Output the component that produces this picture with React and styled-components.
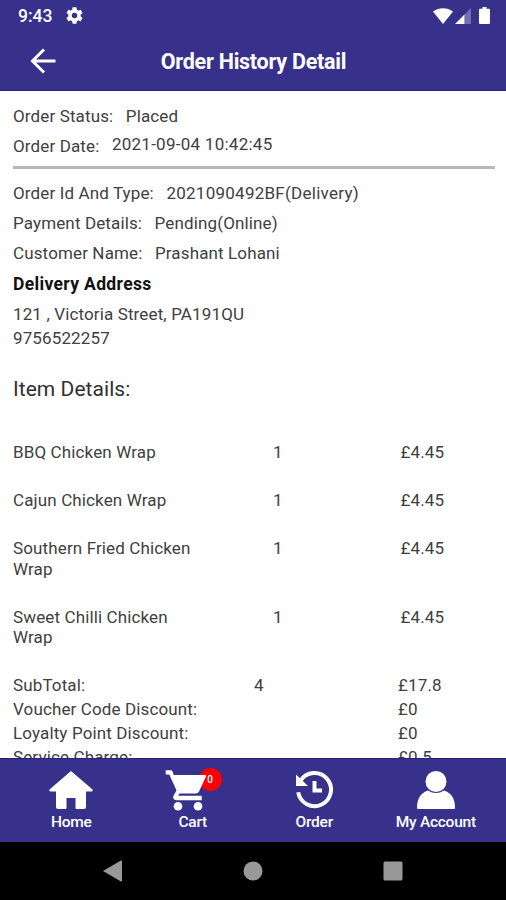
import React, { Component } from "react";
import styled, { createGlobalStyle } from "styled-components";

const GlobalStyle = createGlobalStyle`
  * {
    box-sizing: border-box;
  }
  body {
    margin: 0;
    background-color: #ffffff;
    font-family: Roboto, "Liberation Sans", sans-serif;
    overflow: hidden;
  }
`;

const items = [
  { name: 'BBQ Chicken Wrap', qty: 1, price: '£4.45' },
  { name: 'Cajun Chicken Wrap', qty: 1, price: '£4.45' },
  { name: 'Southern Fried Chicken Wrap', qty: 1, price: '£4.45' },
  { name: 'Sweet Chilli Chicken Wrap', qty: 1, price: '£4.45' },
];

const totals = [
  { label: 'SubTotal:', qty: 4, price: '£17.8' },
  { label: 'Voucher Code Discount:', price: '£0' },
  { label: 'Loyalty Point Discount:', price: '£0' },
  { label: 'Service Charge:', price: '£0.5' },
];

function StatusBar() {
  return (
    <StatusRow>
      <Clock>9:43</Clock>
      <svg width="17" height="17" viewBox="2 2 20 20">
        <path fill="#fff" d="M19.14 12.94c.04-.3.06-.61.06-.94 0-.32-.02-.64-.07-.94l2.03-1.58c.18-.14.23-.41.12-.61l-1.92-3.32c-.12-.22-.37-.29-.59-.22l-2.39.96c-.5-.38-1.03-.7-1.62-.94l-.36-2.54c-.04-.24-.24-.41-.48-.41h-3.84c-.24 0-.43.17-.47.41l-.36 2.54c-.59.24-1.13.57-1.62.94l-2.39-.96c-.22-.08-.47 0-.59.22L2.74 8.87c-.12.21-.08.47.12.61l2.03 1.58c-.05.3-.09.63-.09.94s.02.64.07.94l-2.03 1.58c-.18.14-.23.41-.12.61l1.92 3.32c.12.22.37.29.59.22l2.39-.96c.5.38 1.03.7 1.62.94l.36 2.54c.05.24.24.41.48.41h3.84c.24 0 .44-.17.47-.41l.36-2.54c.59-.24 1.13-.56 1.62-.94l2.39.96c.22.08.47 0 .59-.22l1.92-3.32c.12-.22.07-.47-.12-.61l-2.01-1.58zM12 15.2A3.2 3.2 0 1 1 12 8.8a3.2 3.2 0 0 1 0 6.4z" />
      </svg>
      <Signals>
        <svg width="20" height="16" viewBox="0 0 20 16">
          <path fill="#fff" d="M0 3.6C5.6-.9 14.4-.9 20 3.6L10 16z" />
        </svg>
        <svg width="16" height="16" viewBox="0 0 16 16">
          <path fill="#fff" fillOpacity=".3" d="M9.500 6.500L16 0v16H9.500z" />
          <path fill="#fff" d="M0 16l9.500-9.500V16z" />
        </svg>
        <Battery width="11" height="17" viewBox="0 0 11 17">
          <path fill="#fff" d="M3.500 0h4v1.700H10q1 0 1 1V16q0 1-1 1H1q-1 0-1-1V2.700q0-1 1-1h2.500z" />
        </Battery>
      </Signals>
    </StatusRow>
  );
}

function Header(props) {
  return (
    <HeaderBox>
      <StatusBar />
      <TitleRow>
        <BackButton>
          <svg width="26" height="26" viewBox="0 0 26 26" fill="none" stroke="#fff" strokeWidth="3">
            <path d="M25.500 13H2.500M14 1.500L2.500 13L14 24.500" />
          </svg>
        </BackButton>
        <Title>{props.title}</Title>
      </TitleRow>
    </HeaderBox>
  );
}

function Field(props) {
  return (
    <FieldRow>
      <span>{props.label}</span>
      <FieldValue $raised={props.raised} $numeric={props.numeric}>{props.value}</FieldValue>
    </FieldRow>
  );
}

function HomeIcon() {
  return (
    <svg width="44" height="40" viewBox="0 0 44 40">
      <path fill="#fff" d="M22 1L43.500 19.500q.8 2-1.500 2H37V37q0 2-2 2h-7.500q-1 0-1-1V28h-9v10q0 1-1 1H9q-2 0-2-2V21.500H2q-2.300 0-1.500-2z" />
    </svg>
  );
}

function CartIcon() {
  return (
    <svg width="42" height="42" viewBox="0 0 42 42">
      <path fill="#fff" d="M.7 1.300h5.500q.8 0 1.100.8l1.500 4H40q1.600 0 .9 1.600L34 22.500q-1 2-3 2H14.500l-1.300 2.300h23.500v4.400H11.500q-4.300-.5-3-4.500l3-5.200L4.300 5.500H.7z" />
      <circle cx="13" cy="37.300" r="4.300" fill="#fff" />
      <circle cx="33" cy="37.300" r="4.300" fill="#fff" />
    </svg>
  );
}

function OrderIcon() {
  return (
    <svg width="39" height="40" viewBox="0 0 39 40">
      <path fill="none" stroke="#fff" strokeWidth="4" d="M5.500 10.800A16.500 16.500 0 1 1 3.200 22.200" />
      <path fill="#fff" d="M1 4.500L13 16H1z" />
      <path fill="none" stroke="#fff" strokeWidth="4" d="M19.500 11v9.500H27" />
    </svg>
  );
}

function AccountIcon() {
  return (
    <svg width="40" height="40" viewBox="0 0 40 40">
      <circle cx="20" cy="11.500" r="10.500" fill="#fff" />
      <path fill="#fff" d="M12 20.500q8 5 16 0Q39 24 39 38q0 1-1 1H2q-1 0-1-1Q1 24 12 20.500z" />
    </svg>
  );
}

const tabs = [
  { label: 'Home', icon: HomeIcon },
  { label: 'Cart', icon: CartIcon, badge: 0 },
  { label: 'Order', icon: OrderIcon },
  { label: 'My Account', icon: AccountIcon },
];

class TabBar extends Component {
  render() {
    const listTabs = tabs.map(function(item, index) {
      const Icon = item.icon;
      const hasBadge = item.badge !== undefined;
      return (
        <Tab key={index}>
          <IconBox $hasBadge={hasBadge}>
            {hasBadge && <Badge>{item.badge}</Badge>}
            <Icon />
          </IconBox>
          <TabLabel>{item.label}</TabLabel>
        </Tab>
      );
    });
    return <Tabs>{listTabs}</Tabs>;
  }
}

function SystemNav() {
  return (
    <NavRow>
      <svg width="20" height="22" viewBox="0 0 20 22">
        <path fill="#999" d="M0 11L18 .500q1-.3 1 .7v19.600q0 1-1 .7z" />
      </svg>
      <svg width="20" height="20" viewBox="0 0 20 20">
        <circle cx="10" cy="10" r="9.500" fill="#999" />
      </svg>
      <svg width="20" height="20" viewBox="0 0 20 20">
        <rect x=".5" y=".5" width="19" height="19" rx="1.500" fill="#999" />
      </svg>
    </NavRow>
  );
}

class App extends Component {
  render() {
    return (
      <Screen>
        <GlobalStyle />
        <Header title="Order History Detail" />
        <Content>
          <Field label="Order Status:" value="Placed" />
          <Field label="Order Date:" value="2021-09-04 10:42:45" raised numeric />
          <Divider />
          <Field label="Order Id And Type:" value="2021090492BF(Delivery)" numeric />
          <Field label="Payment Details:" value="Pending(Online)" />
          <Field label="Customer Name:" value="Prashant Lohani" />
          <AddressTitle>Delivery Address</AddressTitle>
          <AddressLine>121 , Victoria Street, PA191QU</AddressLine>
          <AddressLine>9756522257</AddressLine>
          <SectionTitle>Item Details:</SectionTitle>
          {items.map((item, index) => (
            <ItemRow key={index}>
              <ItemName>{item.name}</ItemName>
              <span>{item.qty}</span>
              <span>{item.price}</span>
            </ItemRow>
          ))}
          {totals.map((total, index) => (
            <TotalRow key={index}>
              <span>{total.label}</span>
              <span>{total.qty}</span>
              <span>{total.price}</span>
            </TotalRow>
          ))}
        </Content>
        <TabBar />
        <SystemNav />
      </Screen>
    );
  }
}

const Screen = styled.div`
  display: flex;
  flex-direction: column;
  width: 506px;
  height: 900px;
  overflow: hidden;
`;

const HeaderBox = styled.div`
  flex: none;
  height: 91px;
  background-color: #38318b;
  border-bottom: 1px solid #2a2080;
  color: #ffffff;
`;

const StatusRow = styled.div`
  display: flex;
  align-items: center;
  height: 31px;
  padding: 0 16px 0 18px;
`;

const Clock = styled.span`
  width: 48px;
  font-size: 17.5px;
  font-weight: 500;
`;

const Signals = styled.div`
  display: flex;
  align-items: center;
  gap: 2px;
  margin-left: auto;
`;

const Battery = styled.svg`
  margin-left: 6px;
`;

const TitleRow = styled.div`
  display: grid;
  grid-template-columns: 61px 1fr 60px;
  align-items: center;
  height: 61px;
`;

const BackButton = styled.div`
  display: flex;
  padding: 0 0 2px 30px;
`;

const Title = styled.div`
  text-align: center;
  font-size: 21.5px;
  font-weight: 700;
  letter-spacing: -0.25px;
  white-space: nowrap;
`;

const Content = styled.div`
  flex: none;
  height: 667px;
  padding: 10px 11px 0 13px;
  overflow: hidden;
  color: #404040;
  font-size: 17px;
  letter-spacing: 0.13px;
`;

const FieldRow = styled.div`
  display: flex;
  height: 30px;
  line-height: 30px;
  white-space: nowrap;
`;

const FieldValue = styled.span`
  margin-left: 12.500px;
  ${props => props.$raised ? 'margin-top: -2px;' : ''}
  ${props => props.$numeric ? 'letter-spacing: 0.26px;' : ''}
`;

const Divider = styled.div`
  height: 3px;
  margin: 5px 0 9px;
  background-color: #b9b9b9;
`;

const AddressTitle = styled.div`
  height: 34px;
  line-height: 32px;
  color: #111111;
  font-size: 17.5px;
  font-weight: 700;
  letter-spacing: 0.34px;
`;

const AddressLine = styled.div`
  height: 24px;
  line-height: 24px;
`;

const SectionTitle = styled.div`
  padding-top: 26px;
  height: 92px;
  line-height: 26px;
  font-size: 21px;
  letter-spacing: 0.05px;
  color: #303030;
`;

const ItemRow = styled.div`
  display: grid;
  grid-template-columns: 260px 127.500px 1fr;
  line-height: 20.2px;
  margin-bottom: 28px;
`;

const ItemName = styled.span`
  width: 190px;
`;

const TotalRow = styled.div`
  display: grid;
  grid-template-columns: 241px 144px 1fr;
  height: 24px;
  line-height: 20px;
`;

const Tabs = styled.div`
  flex: none;
  display: grid;
  grid-template-columns: repeat(4, 121.500px);
  justify-content: center;
  height: 84px;
  padding-left: 1px;
  background-color: #38318b;
  border-top: 1px solid #2a2080;
  color: #ffffff;
`;

const Tab = styled.div`
  display: flex;
  flex-direction: column;
  align-items: center;
  padding-top: 11px;
`;

const IconBox = styled.div`
  position: relative;
  display: flex;
  height: 40px;
  ${props => props.$hasBadge ? 'margin: -1px 0 1px -13px;' : ''}

  svg {
    position: relative;
  }
`;

/* sits behind the cart drawing */
const Badge = styled.span`
  position: absolute;
  top: -1px;
  left: 34px;
  width: 23px;
  height: 23px;
  border-radius: 50%;
  background-color: #fb0007;
  font-size: 10px;
  font-weight: 500;
  line-height: 24px;
  padding-left: 8px;
`;

const TabLabel = styled.div`
  font-size: 15.500px;
  font-weight: 500;
  letter-spacing: -0.25px;
  line-height: 25px;
  white-space: nowrap;
`;

const NavRow = styled.div`
  flex: 1;
  display: flex;
  align-items: center;
  justify-content: center;
  gap: 120px;
  background-color: #000000;
`;

export default App;
